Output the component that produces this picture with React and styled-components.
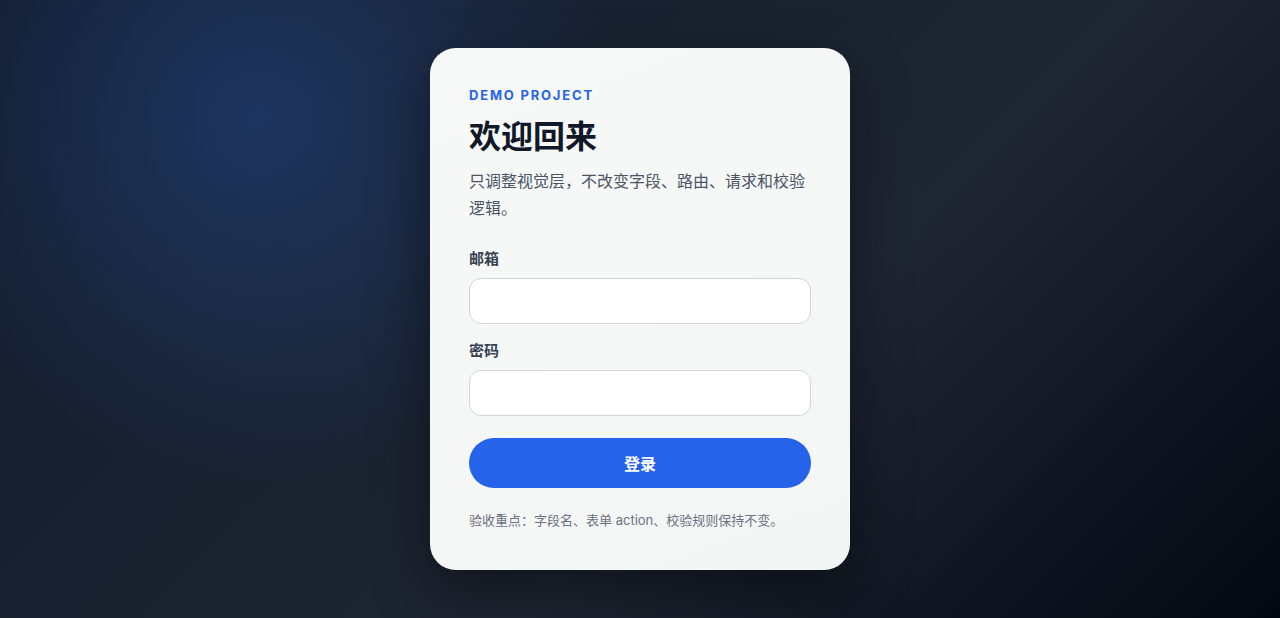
import React from 'react';
import styled, { createGlobalStyle } from 'styled-components';

const GlobalStyle = createGlobalStyle`
  * { box-sizing: border-box; }
  html, body {
    margin: 0;
    padding: 0;
    height: 100%;
  }
  body {
    font-family: Inter, "Noto Sans CJK SC", "Noto Sans", sans-serif;
    -webkit-font-smoothing: antialiased;
  }
  #root { height: 100%; }
`;

function App() {
  return (
    <>
      <GlobalStyle />
      <Page>
        <Card>
          <Eyebrow>DEMO PROJECT</Eyebrow>
          <Title>欢迎回来</Title>
          <Lead>只调整视觉层，不改变字段、路由、请求和校验逻辑。</Lead>
          <Form onSubmit={(e) => e.preventDefault()}>
            <Field>
              <Label htmlFor="email">邮箱</Label>
              <Input id="email" name="email" type="email" />
            </Field>
            <Field>
              <Label htmlFor="password">密码</Label>
              <Input id="password" name="password" type="password" />
            </Field>
            <Submit type="submit">登录</Submit>
          </Form>
          <Note>验收重点：字段名、表单 action、校验规则保持不变。</Note>
        </Card>
      </Page>
    </>
  );
}

export default App;

const Page = styled.div`
  min-height: 100vh;
  display: flex;
  align-items: center;
  justify-content: center;
  background:
    radial-gradient(circle at 20% 19%, rgba(45, 100, 200, 0.32), transparent 32%),
    linear-gradient(135deg, #131c2c 0%, #1b2331 45%, #1f2733 60%, #030712 100%);
`;

const Card = styled.div`
  width: 420px;
  padding: 39px 39px 40px;
  border-radius: 26px;
  background: linear-gradient(160deg, #f7f8f8 0%, #f4f5f5 100%);
  box-shadow: 0 24px 60px rgba(0, 0, 0, 0.45);
`;

const Eyebrow = styled.div`
  font-size: 13px;
  line-height: 16px;
  font-weight: 700;
  letter-spacing: 1.8px;
  color: #2563eb;
  margin-bottom: 15px;
`;

const Title = styled.h1`
  margin: 0 0 12px;
  font-size: 32px;
  line-height: 38px;
  font-weight: 700;
  color: #111827;
`;

const Lead = styled.p`
  margin: 0 0 26px;
  font-size: 16px;
  line-height: 27px;
  color: #4b5563;
`;

const Form = styled.form`
  display: flex;
  flex-direction: column;
  gap: 16px;
`;

const Field = styled.div`
  display: flex;
  flex-direction: column;
  gap: 8px;
`;

const Label = styled.label`
  font-size: 15px;
  line-height: 22px;
  font-weight: 700;
  color: #374151;
`;

const Input = styled.input`
  height: 46px;
  width: 100%;
  padding: 0 14px;
  border: 1px solid #d1d5db;
  border-radius: 12px;
  background: #fff;
  font: inherit;
  font-size: 15px;
  outline: none;
`;

const Submit = styled.button`
  margin-top: 6px;
  height: 50px;
  border: none;
  border-radius: 999px;
  background: #2563eb;
  color: #fff;
  font: inherit;
  font-size: 16px;
  font-weight: 700;
  cursor: pointer;
`;

const Note = styled.p`
  margin: 22px 0 0;
  font-size: 13px;
  line-height: 20px;
  color: #6b7280;
`;
